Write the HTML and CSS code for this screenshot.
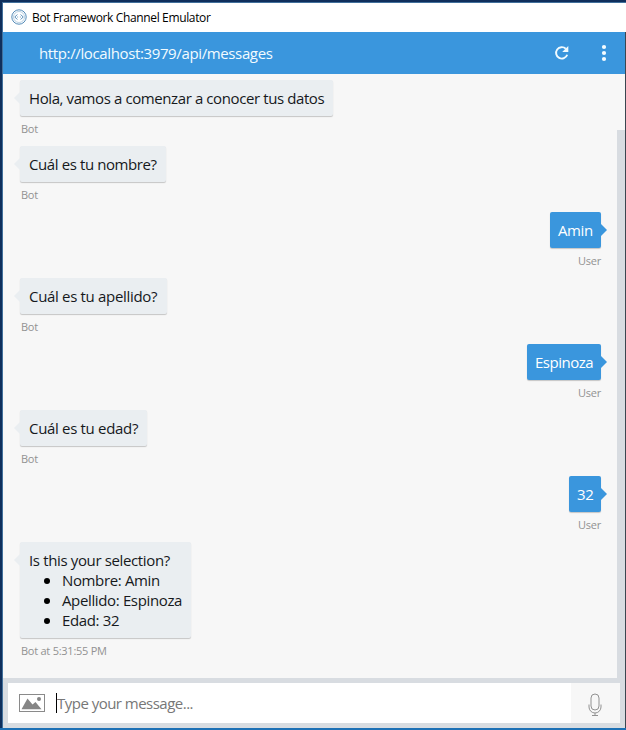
FILE: index.html
```html
<!DOCTYPE html>
<html lang="es">
<head>
<meta charset="utf-8">
<title>Bot Framework Channel Emulator</title>
<link rel="stylesheet" href="styles.css">
</head>
<body>
<div class="window">
  <div class="titlebar">
    <svg class="logo" width="16" height="16" viewBox="0 0 16 16" fill="none" stroke="#548bb8"><circle cx="8" cy="8" r="7.2" stroke-width="1"/><circle cx="8" cy="8" r="5.5" stroke-width=".4"/><path d="M6.300 5.500 3.800 8l2.500 2.500M9.700 5.500 12.200 8l-2.500 2.500"/><path d="M6.300 8h.8M8.900 8h.8"/></svg>
    <span class="title">Bot Framework Channel Emulator</span>
  </div>
  <header class="header">
    <span class="url">http://localhost:3979/api/messages</span>
    <svg class="refresh" width="16" height="16" viewBox="0 0 16 16"><path d="M13.2 9.7A5.7 5.7 0 1 1 11.8 3.8" fill="none" stroke="#f1fbff" stroke-width="1.9"/><path d="M14.3 1v6.1H8.2z" fill="#f1fbff"/></svg>
    <svg class="more" width="6" height="18" viewBox="0 0 6 18" fill="#f4fcff"><circle cx="3" cy="3" r="2.1"/><circle cx="3" cy="9" r="2.1"/><circle cx="3" cy="15" r="2.1"/></svg>
  </header>
  <main class="chat">
    <div class="messages">
      <div class="msg bot"><div class="bubble w-greeting">Hola, vamos a comenzar a conocer tus datos</div><div class="from">Bot</div></div>
      <div class="msg bot"><div class="bubble w-name">Cuál es tu nombre?</div><div class="from">Bot</div></div>
      <div class="msg user"><div class="bubble w-amin">Amin</div><div class="from">User</div></div>
      <div class="msg bot"><div class="bubble w-surname">Cuál es tu apellido?</div><div class="from">Bot</div></div>
      <div class="msg user"><div class="bubble w-espinoza">Espinoza</div><div class="from">User</div></div>
      <div class="msg bot"><div class="bubble w-age">Cuál es tu edad?</div><div class="from">Bot</div></div>
      <div class="msg user"><div class="bubble w-32">32</div><div class="from">User</div></div>
      <div class="msg bot"><div class="bubble w-summary">Is this your selection?<ul><li>Nombre: Amin</li><li>Apellido: Espinoza</li><li>Edad: 32</li></ul></div><div class="from">Bot at 5:31:55 PM</div></div>
    </div>
    <div class="scrollbar"></div>
  </main>
  <footer class="composer">
    <div class="box">
      <div class="upload"><svg width="26" height="18" viewBox="0 0 26 18"><rect x=".5" y=".5" width="25" height="17" fill="none" stroke="#8a8a8a"/><path d="M2.500 15.300 8.500 4.500l5 6L16.500 8l6 7.300z" fill="#858585"/><circle cx="20" cy="5" r="2" fill="#858585"/></svg></div>
      <div class="input"><span class="caret"></span><span class="placeholder">Type your message...</span></div>
      <div class="mic"><svg width="14" height="24" viewBox="0 0 14 24" fill="none" stroke="#929292"><rect x="3" y="1" width="8" height="16" rx="4"/><path d="M1 11.500V14a6 6 0 0 0 12 0v-2.500M7 20v2.500M4 22.500h6"/></svg></div>
    </div>
  </footer>
</div>
</body>
</html>
```
FILE: styles.css
```css
* { box-sizing: border-box; }
body { margin: 0; font-family: "Open Sans", "Noto Sans", sans-serif; }
.window { width: 626px; height: 730px; display: flex; flex-direction: column; padding: 2px 0 0 2px; background: #0f2f5c; border-bottom: 2px solid #1c70b5; overflow: hidden; }
.titlebar { height: 30px; flex: none; display: flex; align-items: center; background: #fff; padding-left: 8px; border-top: 1px solid #41709c; border-left: 1px solid #41709c; }
.logo { margin-top: -2px; }
.title { margin-left: 5px; font-size: 12px; line-height: 16px; letter-spacing: -.36px; color: #000; white-space: nowrap; }
.header { height: 42px; flex: none; display: flex; align-items: center; background: #3a96dd; border-right: 1px solid #3b4650; border-left: 1px solid #41709c; padding: 0 18px 0 36px; }
.url { flex: 1; color: #f2fbff; font-size: 15px; line-height: 20px; letter-spacing: -.37px; }
.refresh { margin-right: 31px; }
.chat { flex: 1; display: flex; min-height: 0; background: #f7f7f7; border-right: 1px solid #3b4650; border-left: 1px solid #41709c; }
.messages { flex: 1; padding: 6px 16px 0 17px; }
.scrollbar { width: 8px; background: #d8dce1; margin-top: 56px; }
.msg { display: flex; flex-direction: column; align-items: flex-start; margin-bottom: 8px; }
.msg.user { align-items: flex-end; }
.bubble { position: relative; min-height: 36px; padding: 8px 0 8px 9px; font-size: 15px; line-height: 20px; letter-spacing: -.4px; color: #16191c; background: #eaeef1; border-radius: 2px; box-shadow: 0 1px 1px rgba(0,0,0,.2); white-space: nowrap; }
.user .bubble { background: #3a96dd; color: #fff; padding-left: 8px; }
.bubble::before { content: ""; position: absolute; top: 12px; border: 6px solid transparent; }
.bot .bubble::before { left: -10px; border-right-color: #eaeef1; border-left-width: 4px; }
.user .bubble::before { right: -12px; border-left-color: #3a96dd; }
.from { height: 22px; padding: 5px 0 0 1px; font-size: 11px; line-height: 15px; letter-spacing: -.25px; color: #929292; }
.w-greeting { width: 313px; }
.w-name { width: 146px; }
.w-amin { width: 51px; }
.w-surname { width: 147px; letter-spacing: -.32px; }
.w-espinoza { width: 74px; letter-spacing: -.5px; }
.w-age { width: 127px; letter-spacing: -.32px; }
.w-32 { width: 32px; }
.w-summary { width: 171px; letter-spacing: -.36px; }
ul { margin: 0; padding-left: 15px; list-style: none; }
li { display: flex; align-items: center; gap: 12px; height: 20px; }
li::before { content: ""; width: 6px; height: 6px; border-radius: 50%; background: #000; margin-top: 2px; }
.composer { height: 50px; flex: none; padding: 5px; background: #d8dce1; border-right: 1px solid #3b4650; border-left: 1px solid #41709c; }
.box { height: 40px; width: 612px; display: flex; background: #fff; }
.upload { width: 48px; display: flex; align-items: center; padding-left: 11px; }
.input { flex: 1; display: flex; align-items: center; }
.caret { width: 1px; height: 20px; background: #000; }
.placeholder { font-size: 15px; line-height: 20px; letter-spacing: -.52px; color: #777; }
.mic { width: 49px; background: #f7f7f7; display: flex; align-items: center; justify-content: center; padding-top: 4px; }
.mic svg { margin-right: 2px; }
```
